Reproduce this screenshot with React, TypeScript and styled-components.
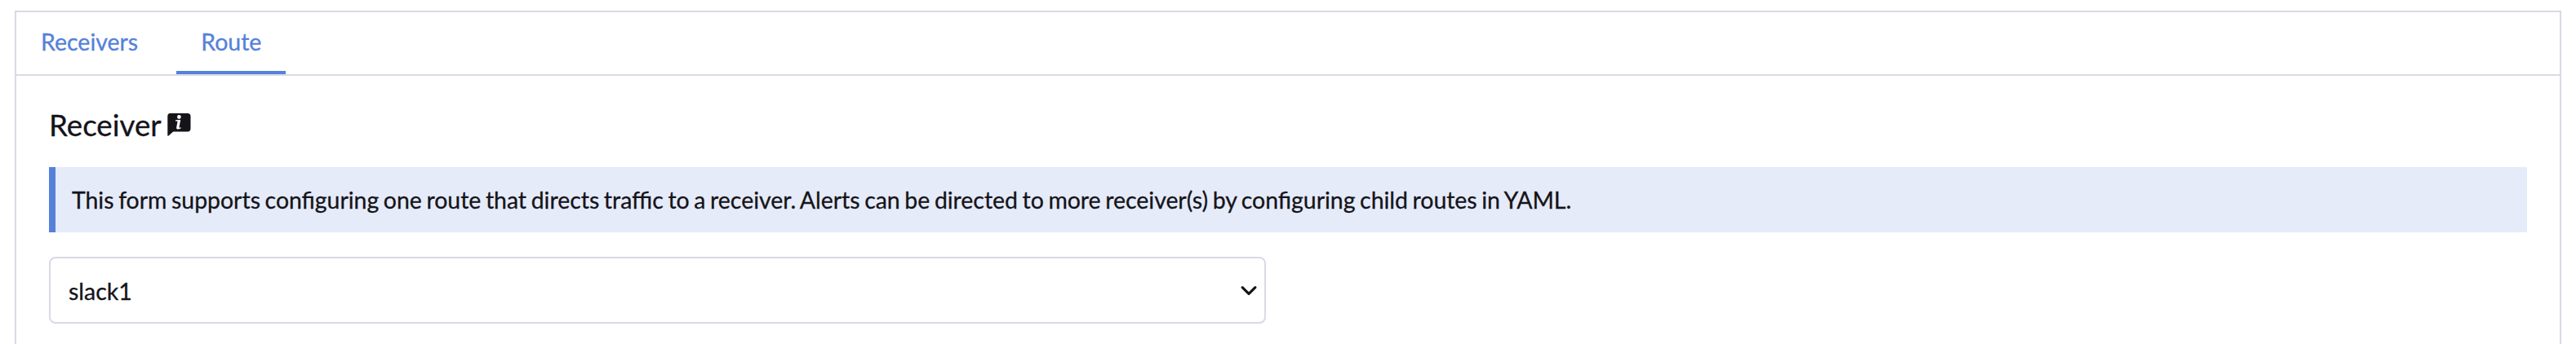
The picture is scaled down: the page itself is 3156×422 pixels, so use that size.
import React from 'react';
import styled, { createGlobalStyle } from 'styled-components';

const Global = createGlobalStyle`
  *{box-sizing:border-box}
  body{margin:0;background:#fff;font-family:Lato,sans-serif;color:#141419;overflow:hidden;-webkit-text-stroke:0.3px currentColor}
`;
const Page = styled.div`height:422px;padding:13px 18px 0;overflow:hidden;`;
const Panel = styled.section`height:440px;border:2px solid #d8dae6;`;
const Tabs = styled.nav`display:flex;gap:17px;height:78px;border-bottom:2px solid #d8dae6;`;
const Tab = styled.a<{ $active?: boolean }>`
  padding:19px 30px 0;font-size:28.5px;line-height:34px;color:#5681da;
  border-bottom:4px solid ${p => (p.$active ? '#5681da' : 'transparent')};
`;
const Body = styled.div`padding:38px 40px 0;`;
const Title = styled.h3`display:flex;align-items:center;gap:7px;margin:0;font-size:36.7px;line-height:44px;font-weight:400;`;
const Banner = styled.div`
  margin-top:30px;height:80px;padding-left:20px;border-left:8px solid #5681da;background:#e6ebf9;
  font-size:28.4px;line-height:80px;word-spacing:-1.6px;
`;
const Select = styled.div`
  margin-top:30px;width:1491px;height:82px;border:2px solid #d8dae6;border-radius:8px;
  padding:2px 9px 0 22px;display:flex;align-items:center;justify-content:space-between;font-size:28.5px;
`;

export default function App() {
  return (
    <Page>
      <Global />
      <Panel>
        <Tabs><Tab>Receivers</Tab><Tab $active>Route</Tab></Tabs>
        <Body>
          <Title>Receiver
            <svg width="29" height="28" viewBox="0 0 29 28">
              <path d="M3.5 0h21.3q3.7 0 3.7 3.7v15.1q0 3.7-3.7 3.7H7.2L1.2 27.7Q.3 28 .3 27V3.7Q.3 0 3.5 0z" fill="#141419" />
              <circle cx="14.4" cy="4.5" r="2.4" fill="#fff" />
              <path d="M10 8.3L16.2 7.9L14.5 17.2Q14.5 18 16.9 17.3L16.7 18.3Q13.8 20.2 11.7 19.2Q10.9 18.7 11.2 17.2L12.6 9.8L10 9.4z" fill="#fff" />
            </svg>
          </Title>
          <Banner>This form supports configuring one route that directs traffic to a receiver. Alerts can be directed to more receiver(s) by configuring child routes in YAML.</Banner>
          <Select>slack1
            <svg width="20" height="14" viewBox="0 0 20 14"><path d="M2.2 2.7l7.8 7.6 7.8-7.6" fill="none" stroke="#141419" strokeWidth="3.2" strokeLinecap="round" strokeLinejoin="round" /></svg>
          </Select>
        </Body>
      </Panel>
    </Page>
  );
}
